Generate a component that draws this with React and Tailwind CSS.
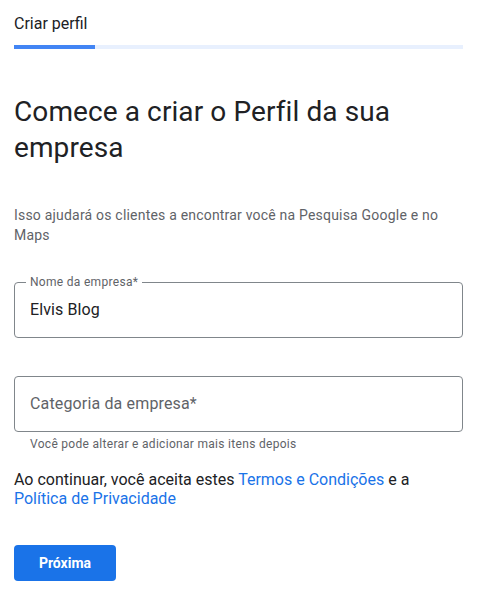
export default function App() {
  return (
    <div className="min-h-[608px] bg-white font-['Roboto',sans-serif] text-[#202124]">
      <div className="w-[449px] ml-[14px] pt-[14px]">
        {/* Step header */}
        <div className="text-[16px] leading-[20px]">Criar perfil</div>
        <div className="mt-[11px] flex h-[4px] w-full bg-[#e8f0fe]">
          <div className="h-full w-[81px] bg-[#4285f4]" />
        </div>

        <h1 className="mt-[45px] text-[28px] leading-[36px] font-normal tracking-[0.1px]">
          Comece a criar o Perfil da sua empresa
        </h1>

        <p className="mt-[39px] text-[14px] leading-[20px] tracking-[0.2px] text-[#5f6368]">
          Isso ajudará os clientes a encontrar você na Pesquisa Google e no Maps
        </p>

        {/* Nome da empresa */}
        <div className="relative mt-[37px] flex h-[56px] items-center rounded-[4px] border border-[#80868b] px-[15px]">
          <span className="absolute -top-[9px] left-[11px] bg-white px-1 text-[12px] leading-[16px] tracking-[0.3px] text-[#5f6368]">
            Nome da empresa*
          </span>
          <span className="text-[16px] leading-[20px] tracking-[0.1px] text-[#202124]">Elvis Blog</span>
        </div>

        {/* Categoria */}
        <div className="mt-[38px] flex h-[56px] items-center rounded-[4px] border border-[#80868b] px-[15px]">
          <span className="text-[16px] leading-[20px] tracking-[0.15px] text-[#5f6368]">Categoria da empresa*</span>
        </div>
        <div className="mt-[4px] pl-[16px] text-[12px] leading-[16px] tracking-[0.3px] text-[#5f6368]">
          Você pode alterar e adicionar mais itens depois
        </div>

        <p className="mt-[18px] text-[16px] leading-[19px]">
          Ao continuar, você aceita estes <a className="text-[#1a73e8]">Termos e Condições</a> e a{' '}
          <a className="text-[#1a73e8]">Política de Privacidade</a>
        </p>

        <button className="mt-[37px] h-[36px] w-[102px] rounded-[4px] bg-[#1a73e8] text-[14px] font-bold text-white">
          Próxima
        </button>
      </div>
    </div>
  );
}
